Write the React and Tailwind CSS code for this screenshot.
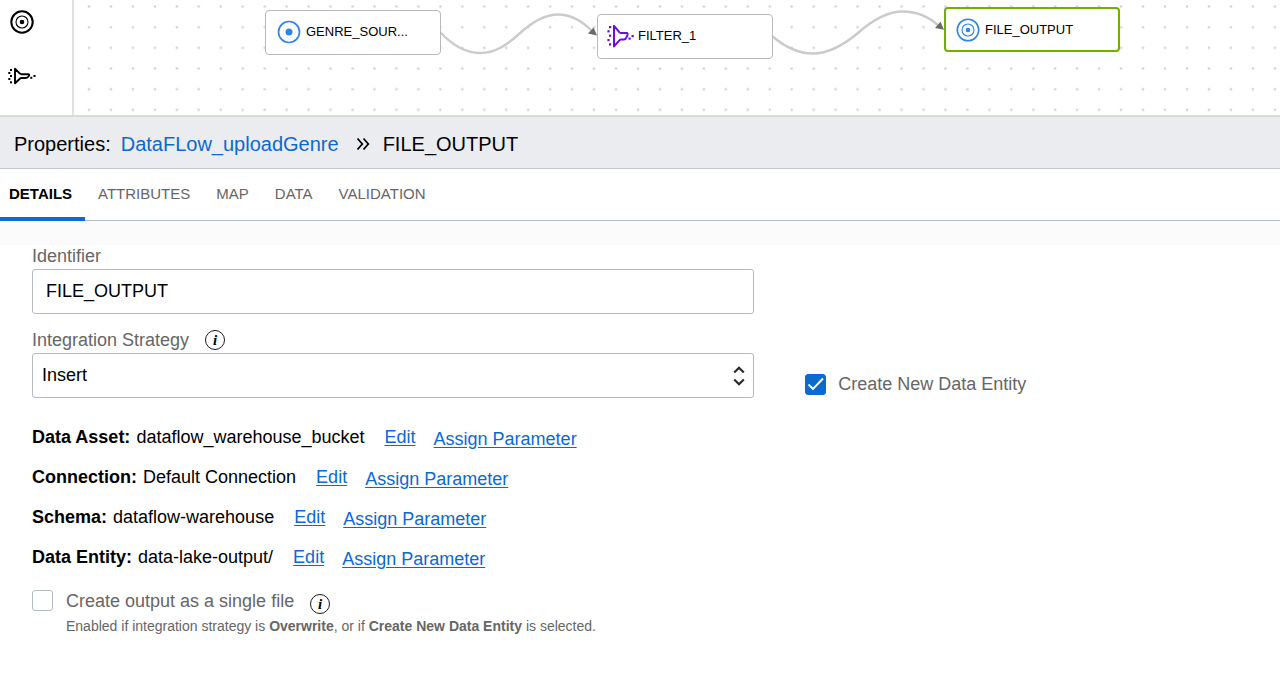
import React, { useState } from "react";

const FONT = "font-['Liberation_Sans',Arial,sans-serif]";

function FilterIcon({ className }) {
  return (
    <svg viewBox="0 0 28 24" className={className} fill="none" stroke="currentColor" aria-hidden="true">
      <path d="M7 1.800v20.600l5.600-6.200c.5-.6 1-.8 1.700-.8h2.600c1.500 0 2.300-1.100 2.800-2.400l.9-2.400c.3-.9-.1-1.500-1-1.500h-5.400c-.700 0-1.200-.2-1.700-.7L7 1.800z" strokeWidth="2" strokeLinejoin="round" />
      <g fill="currentColor" stroke="none">
        <rect x="2" y="2" width="2.200" height="2.200" />
        <rect x="0.400" y="6.200" width="2.200" height="2.200" />
        <rect x="2" y="10.600" width="2.200" height="2.200" />
        <rect x="0.400" y="15" width="2.200" height="2.200" />
        <rect x="2" y="19.300" width="2.200" height="2.200" />
        <rect x="21.500" y="13.500" width="2.200" height="2.200" />
        <rect x="24.500" y="11" width="2.200" height="2.200" />
      </g>
    </svg>
  );
}

function TargetIcon({ className, outer = 1.6 }) {
  return (
    <svg viewBox="0 0 24 24" className={className} fill="none" stroke="currentColor" aria-hidden="true">
      <circle cx="12" cy="12" r="10.700" strokeWidth={outer} />
      <circle cx="12" cy="12" r="6" strokeWidth="1.100" />
      <circle cx="12" cy="12" r="2.300" fill="currentColor" stroke="none" />
    </svg>
  );
}

function SourceIcon({ className }) {
  return (
    <svg viewBox="0 0 24 24" className={className} fill="none" stroke="currentColor" aria-hidden="true">
      <circle cx="12" cy="12" r="10.500" strokeWidth="1.700" />
      <circle cx="12" cy="12" r="6" strokeWidth="0.600" opacity="0.150" />
      <circle cx="12" cy="12" r="3.500" fill="currentColor" stroke="none" />
    </svg>
  );
}

function InfoButton({ label }) {
  return (
    <button
      type="button"
      aria-label={label}
      className="flex size-5 shrink-0 items-center justify-center rounded-full border border-[#1a1a1a] font-['Liberation_Serif',serif] text-[15px] leading-none font-bold text-black italic"
    >
      i
    </button>
  );
}

function Canvas() {
  const node = "absolute flex h-[45px] w-44 items-center rounded bg-white text-[13px] text-black";
  return (
    <section className="flex h-[115px] overflow-hidden bg-white" aria-label="Data flow">
      <aside className="flex w-[74px] shrink-0 flex-col gap-[33px] border-r-2 border-[#e0e0e0] pt-[10px] pl-2">
        <button type="button" aria-label="Target" className="ml-[2px] size-6">
          <TargetIcon className="size-6" outer={2} />
        </button>
        <button type="button" aria-label="Filter" className="w-7">
          <svg viewBox="0 0 28 18" className="h-[18px] w-7" fill="none" stroke="currentColor" aria-hidden="true">
            <path d="M7 1.800v14.400l4.900-4.500c.5-.5.900-.7 1.500-.7h4.300c1.500 0 2.400-.7 2.900-1.600l.4-.8c.4-.8 0-1.400-.8-1.400h-6.800c-.600 0-1-.200-1.500-.6L7 1.800z" strokeWidth="1.900" strokeLinejoin="round" />
            <g fill="currentColor" stroke="none">
              <rect x="2" y="2" width="2" height="2" />
              <rect x="0.300" y="5" width="2" height="2" />
              <rect x="2" y="8" width="2" height="2" />
              <rect x="0.300" y="11" width="2" height="2" />
              <rect x="2" y="14.300" width="2" height="2" />
              <rect x="22.300" y="9.800" width="2" height="2" />
              <rect x="25.500" y="8" width="2" height="2" />
            </g>
          </svg>
        </button>
      </aside>
      <div className="relative min-w-0 flex-1 overflow-hidden">
        <svg className="absolute inset-0 h-full w-full" aria-hidden="true">
          <defs>
            <pattern id="dots" x="4.020" y="-3.830" width="21.960" height="20.670" patternUnits="userSpaceOnUse">
              <circle cx="10.980" cy="10.330" r="1.300" fill="#d2d2d2" />
            </pattern>
          </defs>
          <rect width="100%" height="100%" fill="url(#dots)" />
          <g transform="translate(-74 0)">
            <g fill="none" stroke="#cbcbcb" strokeWidth="2.400">
              <path d="M440 32C454 47 467 53 480 53C496 53 508 44 519 34C532 22 545 14.500 558 14.500C572 14.500 583 22 592 31" />
              <path d="M772 36C786 48 799 53.500 813 53.500C831 53.500 846 43 858 33C872 20.500 887 11.500 903 11.500C917 11.500 929 17 939 26" />
            </g>
            <path d="M588 33.500L593.500 27.500L597 35.500Z" fill="#6b6b6b" />
            <path d="M935 28L940.500 21.700L944 29.700Z" fill="#6b6b6b" />
          </g>
        </svg>
        <div className={`${node} top-[10px] left-[191px] gap-[5px] border border-[#b9b9b9] pb-px pl-[11px]`}>
          <SourceIcon className="size-6 text-[#2f86e0]" />
          GENRE_SOUR...
        </div>
        <div className={`${node} top-[14px] left-[523px] gap-[3px] border border-[#b9b9b9] pb-px pl-[9px]`}>
          <FilterIcon className="h-6 w-7 text-[#6a0fd0]" />
          FILTER_1
        </div>
        <div className={`${node} top-[7px] left-[870px] gap-[5px] border-2 border-[#72b000] pl-[10px]`}>
          <TargetIcon className="size-6 text-[#2f86e0]" />
          FILE_OUTPUT
        </div>
      </div>
    </section>
  );
}

const TABS = ["DETAILS", "ATTRIBUTES", "MAP", "DATA", "VALIDATION"];

function Tabs() {
  const [active, setActive] = useState("DETAILS");
  return (
    <div role="tablist" className="flex h-[52px] border-b border-[#b4bcc4] text-[15px]">
      {TABS.map((t) => (
        <button
          key={t}
          role="tab"
          type="button"
          aria-selected={t === active}
          onClick={() => setActive(t)}
          className={
            "-mb-px border-b-4 px-[13px] pt-0.5 first:pl-[9px] " +
            (t === active ? "border-[#0a6ad0] font-bold text-black" : "border-transparent text-[#666]")
          }
        >
          {t}
        </button>
      ))}
    </div>
  );
}

const ROWS = [
  ["Data Asset:", "dataflow_warehouse_bucket"],
  ["Connection:", "Default Connection"],
  ["Schema:", "dataflow-warehouse"],
  ["Data Entity:", "data-lake-output/"],
];

export default function App() {
  const [createNew, setCreateNew] = useState(true);
  const [single, setSingle] = useState(false);
  return (
    <main className={`min-h-screen bg-white text-black ${FONT}`}>
      <Canvas />
      <header className="flex h-[54px] items-center border-t-2 border-b border-t-[#dadada] border-b-[#c3c8cd] bg-[#ebecf0] pt-[3px] pl-3.5">
        <h1 className="flex items-center text-xl">
          <span>Properties:</span>
          <a href="#flow" className="ml-2.5 text-[#0a6ad0]">DataFLow_uploadGenre</a>
          <svg viewBox="0 0 16 14" className="mr-3 ml-4 h-3.5 w-4" fill="none" stroke="black" strokeWidth="1.800" aria-hidden="true">
            <path d="M2.500 1.500L7.300 7L2.500 12.500M8.500 1.500L13.300 7L8.500 12.500" />
          </svg>
          <span>FILE_OUTPUT</span>
        </h1>
      </header>
      <Tabs />
      <div className="h-6 bg-[#fbfbfb]" />
      <form className="px-8 pb-8 text-lg" onSubmit={(e) => e.preventDefault()}>
        <div className="grid grid-cols-[62fr_38fr] gap-x-[51px]">
          <div>
            <label htmlFor="identifier" className="flex h-6 items-center pb-0.5 text-[#666]">Identifier</label>
            <input
              id="identifier"
              defaultValue="FILE_OUTPUT"
              className="h-[45px] w-full rounded-[3px] border border-[#b4bac1] px-[13px]"
            />
            <div className="mt-[15px] flex h-6 items-center gap-4 pb-0.5">
              <label htmlFor="strategy" className="text-[#666]">Integration Strategy</label>
              <InfoButton label="About integration strategy" />
            </div>
            <div className="relative">
              <select
                id="strategy"
                className="block h-[45px] w-full appearance-none rounded-[3px] border border-[#b4bac1] bg-white px-[9px] pb-0.5"
              >
                <option>Insert</option>
                <option>Overwrite</option>
              </select>
              <svg viewBox="0 0 12 20" className="pointer-events-none absolute top-[13px] right-[9px] h-5 w-3" fill="none" stroke="#2a2a2a" strokeWidth="2.200" aria-hidden="true">
                <path d="M1.200 6.500L6 1.800L10.800 6.500M1.200 13.500L6 18.200L10.800 13.500" />
              </svg>
            </div>
          </div>
          <div className="flex items-end">
            <label className="flex items-center gap-3 text-[#666]">
              <span className="relative flex size-[21px]">
                <input
                  type="checkbox"
                  checked={createNew}
                  onChange={(e) => setCreateNew(e.target.checked)}
                  className="size-[21px] appearance-none rounded-[3px] border border-[#b4bac1] checked:border-[#0a6ad0] checked:bg-[#0a6ad0]"
                />
                <svg viewBox="0 0 21 21" className="pointer-events-none absolute inset-0" fill="none" stroke="white" strokeWidth="1.900" aria-hidden="true">
                  <path d="M3.500 10.500L8 15L18 4.500" />
                </svg>
              </span>
              Create New Data Entity
            </label>
          </div>
        </div>

        <div className="mt-[19px]">
          {ROWS.map(([name, value]) => (
            <div key={name} className="flex h-10 items-center">
              <span className="font-bold">{name}</span>
              <span className="ml-1.5">{value}</span>
              <a href="#edit" className="ml-5 text-[#0a6ad0] underline underline-offset-2">Edit</a>
              <a href="#assign" className="ml-[18px] pt-[3px] text-[#0a6ad0] underline underline-offset-2">Assign Parameter</a>
            </div>
          ))}
        </div>

        <div className="mt-[9px] flex gap-[13px]">
          <input
            id="single"
            type="checkbox"
            checked={single}
            onChange={(e) => setSingle(e.target.checked)}
            className="mt-1 size-[21px] shrink-0 appearance-none rounded-[3px] border border-[#b4bac1] checked:bg-[#0a6ad0]"
          />
          <div className="text-[#666]">
            <div className="flex h-[30px] items-center gap-4">
              <label htmlFor="single">Create output as a single file</label>
              <span className="pt-1.5">
                <InfoButton label="About single file output" />
              </span>
            </div>
            <p className="text-sm">
              Enabled if integration strategy is <b>Overwrite</b>, or if <b>Create New Data Entity</b> is selected.
            </p>
          </div>
        </div>
      </form>
    </main>
  );
}
